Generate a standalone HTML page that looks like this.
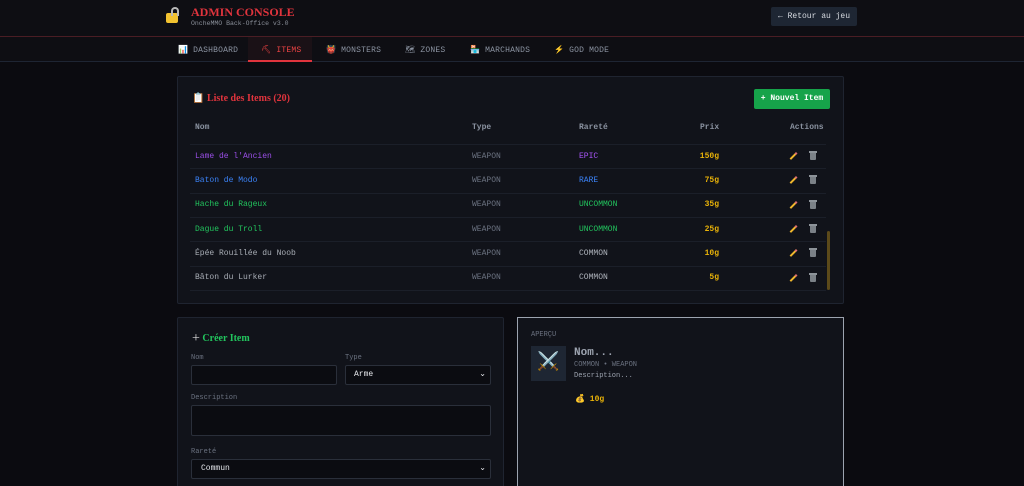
<!DOCTYPE html>
<html><head><meta charset="utf-8"><style>
*{margin:0;padding:0;box-sizing:border-box}
html,body{width:1024px;height:486px;overflow:hidden}
body{background:#0b0b10;font-family:"Liberation Mono",monospace;color:#d1d5db;position:relative;font-size:8px}
.a{position:absolute;white-space:nowrap}
.hdr{left:0;top:0;width:1024px;height:37px;background:#0e0e13;border-bottom:1px solid #4a1d24}
.nav{left:0;top:37px;width:1024px;height:25px;background:#0e0e13;border-bottom:1px solid #1e2533}
.nv{top:45px;color:#8b93a1;font-size:8px;letter-spacing:.2px}
.card{background:#11131a;border:1px solid #1f2430}
.row{left:190px;width:636px;height:1px;background:#1b1f29}
.c{font-size:8px}
.pen{width:9px;height:2px;background:#f0b72c;transform:rotate(-45deg);border-right:2px solid #e06a7a}
.bin{width:6px;height:7px;background:#7b8187;border-radius:0 0 1px 1px}
.bin:before{content:"";position:absolute;left:-1px;top:-2px;width:8px;height:1.5px;background:#8d9399}
.inp{background:#0b0c11;border:1px solid #2a2f3a;border-radius:2px}
.lbl{color:#6b7280;font-size:7px}
</style></head><body>
<div class="a hdr"></div>
<div class="a" style="left:166px;top:13px;width:12px;height:10px;background:#f2c230;border-radius:2px"></div>
<div class="a" style="left:171px;top:7px;width:8px;height:9px;border:2px solid #b8b8b8;border-bottom:none;border-radius:4px 4px 0 0"></div>
<div class="a" style="left:191px;top:5px;font-family:'Liberation Serif',serif;font-weight:bold;font-size:12px;color:#e0343d">ADMIN CONSOLE</div>
<div class="a" style="left:191px;top:20px;font-size:6.5px;color:#8a8f99">OncheMMO Back-Office v3.0</div>
<div class="a" style="left:771px;top:7px;width:86px;height:19px;background:#1e2633;border-radius:2px;color:#d6dae0;font-size:8px;line-height:19px;text-align:center">← Retour au jeu</div>
<div class="a nav"></div>
<div class="a" style="left:248px;top:37px;width:64px;height:25px;background:#1a1116;border-bottom:2px solid #e0343d"></div>
<div class="a nv" style="left:178px">📊 DASHBOARD</div>
<div class="a nv" style="left:261px;color:#ef4444">⛏ ITEMS</div>
<div class="a nv" style="left:326px">👹 MONSTERS</div>
<div class="a nv" style="left:405px">🗺 ZONES</div>
<div class="a nv" style="left:470px">🏪 MARCHANDS</div>
<div class="a nv" style="left:554px"><span style="color:#f2c230">⚡</span> GOD MODE</div>

<div class="a card" style="left:177px;top:76px;width:667px;height:228px;border-radius:2px"></div>
<div class="a" style="left:192px;top:93px;font-family:'Liberation Serif',serif;font-weight:bold;font-size:10px;color:#e0343d">📋 Liste des Items (20)</div>
<div class="a" style="left:754px;top:89px;width:76px;height:20px;background:#16a34a;border-radius:2px;color:#fff;font-weight:bold;font-size:8px;line-height:20px;text-align:center">+ Nouvel Item</div>
<div class="a c" style="left:195px;top:123px;color:#8b93a1;font-weight:bold">Nom</div>
<div class="a c" style="left:472px;top:123px;color:#8b93a1;font-weight:bold">Type</div>
<div class="a c" style="left:579px;top:123px;color:#8b93a1;font-weight:bold">Rareté</div>
<div class="a c" style="left:700px;top:123px;color:#8b93a1;font-weight:bold">Prix</div>
<div class="a c" style="left:790px;top:123px;color:#8b93a1;font-weight:bold">Actions</div>
<div class="a row" style="top:144px"></div>
<div class="a row" style="top:168px"></div><div class="a row" style="top:193px"></div><div class="a row" style="top:217px"></div><div class="a row" style="top:241px"></div><div class="a row" style="top:266px"></div><div class="a row" style="top:290px"></div>

<div class="a c" style="left:195px;top:152px;color:#9b4fe8">Lame de l'Ancien</div>
<div class="a c" style="left:195px;top:176px;color:#3b82f6">Baton de Modo</div>
<div class="a c" style="left:195px;top:200px;color:#22c55e">Hache du Rageux</div>
<div class="a c" style="left:195px;top:225px;color:#22c55e">Dague du Troll</div>
<div class="a c" style="left:195px;top:249px;color:#a8adb5">Épée Rouillée du Noob</div>
<div class="a c" style="left:195px;top:273px;color:#a8adb5">Bâton du Lurker</div>

<div class="a c" style="left:472px;top:152px;color:#6b7280">WEAPON</div>
<div class="a c" style="left:472px;top:176px;color:#6b7280">WEAPON</div>
<div class="a c" style="left:472px;top:200px;color:#6b7280">WEAPON</div>
<div class="a c" style="left:472px;top:225px;color:#6b7280">WEAPON</div>
<div class="a c" style="left:472px;top:249px;color:#6b7280">WEAPON</div>
<div class="a c" style="left:472px;top:273px;color:#6b7280">WEAPON</div>

<div class="a c" style="left:579px;top:152px;color:#a855f7">EPIC</div>
<div class="a c" style="left:579px;top:176px;color:#3b82f6">RARE</div>
<div class="a c" style="left:579px;top:200px;color:#22c55e">UNCOMMON</div>
<div class="a c" style="left:579px;top:225px;color:#22c55e">UNCOMMON</div>
<div class="a c" style="left:579px;top:249px;color:#b0b5bd">COMMON</div>
<div class="a c" style="left:579px;top:273px;color:#b0b5bd">COMMON</div>

<div class="a c" style="right:305px;top:152px;color:#eab308;font-weight:bold">150g</div>
<div class="a c" style="right:305px;top:176px;color:#eab308;font-weight:bold">75g</div>
<div class="a c" style="right:305px;top:200px;color:#eab308;font-weight:bold">35g</div>
<div class="a c" style="right:305px;top:225px;color:#eab308;font-weight:bold">25g</div>
<div class="a c" style="right:305px;top:249px;color:#eab308;font-weight:bold">10g</div>
<div class="a c" style="right:305px;top:273px;color:#eab308;font-weight:bold">5g</div>

<div class="a pen" style="left:789px;top:155px"></div><div class="a bin" style="left:810px;top:153px"></div>
<div class="a pen" style="left:789px;top:179px"></div><div class="a bin" style="left:810px;top:177px"></div>
<div class="a pen" style="left:789px;top:204px"></div><div class="a bin" style="left:810px;top:202px"></div>
<div class="a pen" style="left:789px;top:228px"></div><div class="a bin" style="left:810px;top:226px"></div>
<div class="a pen" style="left:789px;top:252px"></div><div class="a bin" style="left:810px;top:250px"></div>
<div class="a pen" style="left:789px;top:277px"></div><div class="a bin" style="left:810px;top:275px"></div>
<div class="a" style="left:827px;top:231px;width:3px;height:59px;background:#5c4a1a;border-radius:2px"></div>

<div class="a card" style="left:177px;top:317px;width:327px;height:180px;border-radius:2px"></div>
<div class="a" style="left:192px;top:331px;font-family:'Liberation Serif',serif;font-weight:bold;font-size:10px;color:#22c55e"><span style="color:#ddd;font-size:14px;font-weight:normal;vertical-align:-1px">+</span> Créer Item</div>
<div class="a lbl" style="left:191px;top:354px">Nom</div>
<div class="a lbl" style="left:345px;top:354px">Type</div>
<div class="a inp" style="left:191px;top:365px;width:146px;height:20px"></div>
<div class="a inp" style="left:345px;top:365px;width:146px;height:20px;color:#e5e7eb;font-size:8px;line-height:18px;padding-left:8px">Arme<span style="position:absolute;right:4px">⌄</span></div>
<div class="a lbl" style="left:191px;top:394px">Description</div>
<div class="a inp" style="left:191px;top:405px;width:300px;height:31px"></div>
<div class="a lbl" style="left:191px;top:448px">Rareté</div>
<div class="a inp" style="left:191px;top:459px;width:300px;height:20px;color:#e5e7eb;font-size:8px;line-height:18px;padding-left:9px">Commun<span style="position:absolute;right:4px">⌄</span></div>

<div class="a" style="left:517px;top:317px;width:327px;height:180px;background:#11131a;border:1px solid #9ca3af"></div>
<div class="a lbl" style="left:531px;top:331px">APERÇU</div>
<div class="a" style="left:531px;top:346px;width:35px;height:35px;background:#1e2633;text-align:center;line-height:35px;font-size:18px">⚔️</div>
<div class="a" style="left:574px;top:347px;font-weight:bold;font-size:11px;color:#9ca3af">Nom...</div>
<div class="a lbl" style="left:574px;top:361px">COMMON • WEAPON</div>
<div class="a" style="left:574px;top:372px;font-size:7px;color:#9ca3af">Description...</div>
<div class="a" style="left:575px;top:394px;font-size:8px;color:#eab308;font-weight:bold">💰 10g</div>
</body></html>
